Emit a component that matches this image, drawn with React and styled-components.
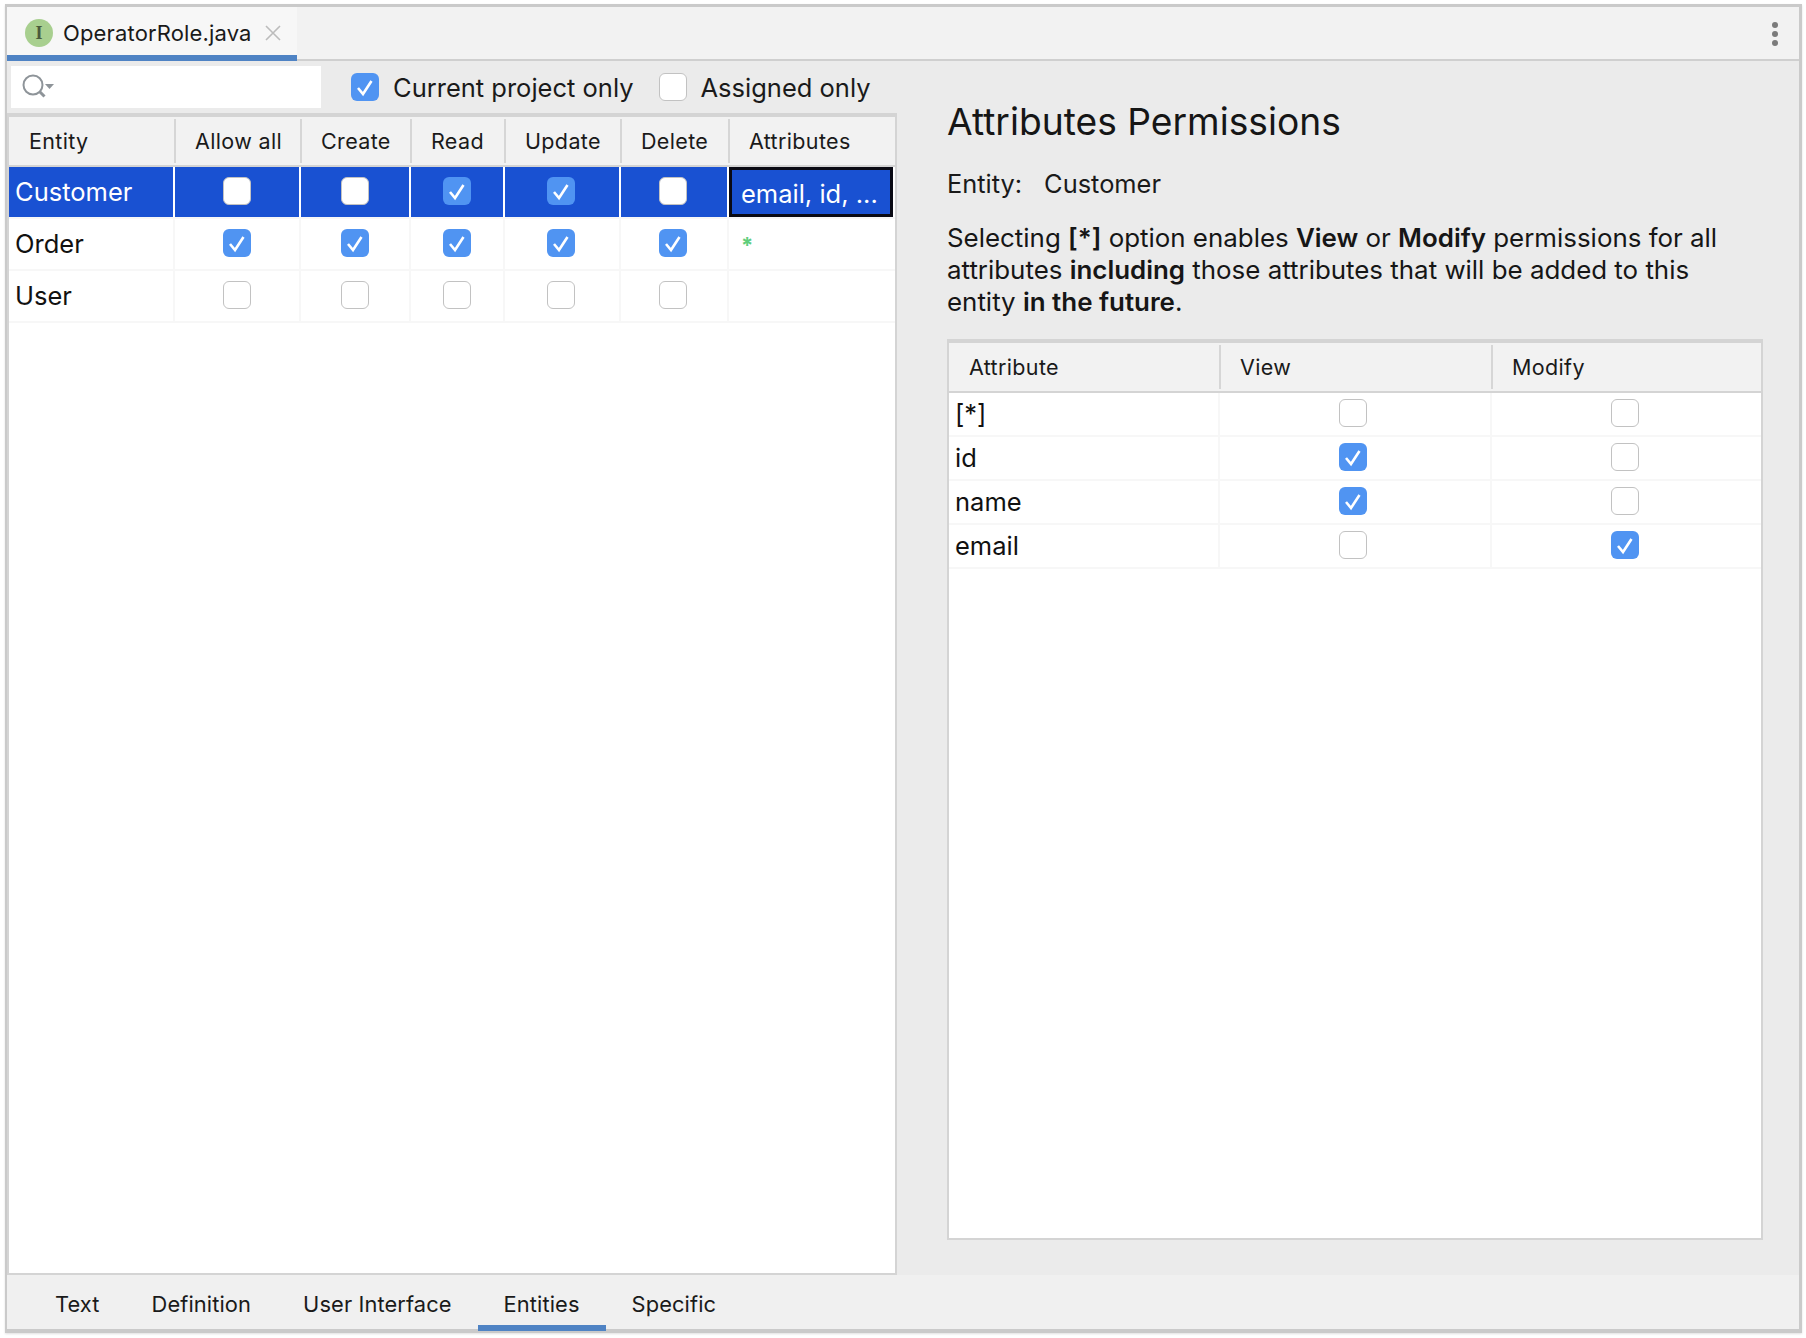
import React from 'react';
import styled, { createGlobalStyle } from 'styled-components';

const GlobalStyle = createGlobalStyle`
  html, body {
    margin: 0;
    padding: 0;
    background: #fff;
  }
  body {
    font-family: Inter, "Liberation Sans", sans-serif;
    color: #1a1a1a;
  }
`;

const Page = styled.div`
  padding: 4px 0 0 5px;
  width: 1806px;
  height: 1338px;
  box-sizing: border-box;
`;

const Window = styled.div`
  width: 1797px;
  height: 1329px;
  box-sizing: border-box;
  display: flex;
  flex-direction: column;
  border-style: solid;
  border-color: #cacaca;
  border-width: 3px 3px 4px 2px;
  background: #ebebeb;
  box-shadow: 0 1px 2px rgba(0, 0, 0, 0.12);
`;

const TabBar = styled.div`
  height: 54px;
  flex: none;
  box-sizing: border-box;
  display: flex;
  justify-content: space-between;
  background: #f2f2f2;
  border-bottom: 2px solid #cfcfcf;
`;

const EditorTab = styled.div`
  width: 290px;
  height: 54px;
  box-sizing: border-box;
  display: flex;
  align-items: center;
  padding: 3px 0 0 18px;
  background: #f7f7f7;
  border-bottom: 6px solid #4f83c4;
  font-size: 22px;
  letter-spacing: 0.15px;
`;

const FileBadge = styled.span`
  width: 28px;
  height: 28px;
  flex: none;
  border-radius: 50%;
  background: #a8cf8f;
  color: #4a5a3c;
  font-family: "Liberation Serif", serif;
  font-weight: 700;
  font-size: 18px;
  line-height: 28px;
  text-align: center;
  margin-right: 10px;
`;

const CloseIcon = styled.svg`
  width: 16px;
  height: 16px;
  flex: none;
  margin-left: 13px;
`;

const MoreDots = styled.svg`
  width: 8px;
  height: 26px;
  margin: 14px 20px 0 0;
`;

const Body = styled.div`
  flex: 1;
  min-height: 0;
  display: flex;
`;

const LeftPane = styled.div`
  width: 890px;
  flex: none;
  box-sizing: border-box;
  display: flex;
  flex-direction: column;
`;

const Toolbar = styled.div`
  height: 52px;
  flex: none;
  box-sizing: border-box;
  display: flex;
  align-items: center;
  padding: 0 0 0 4px;
`;

const SearchField = styled.div`
  width: 310px;
  height: 42px;
  box-sizing: border-box;
  background: #fff;
  display: flex;
  align-items: center;
  padding: 2px 0 0 10px;
  margin-right: 30px;
`;

const ToolbarOption = styled.label`
  display: flex;
  align-items: center;
  gap: 14px;
  font-size: 25.5px;
  margin-right: ${p => p.$gap || 0}px;
`;

const CheckBox = styled.span`
  width: 28px;
  height: 28px;
  flex: none;
  box-sizing: border-box;
  border-radius: 6px;
  background: ${p => (p.$checked ? '#5094f2' : '#fff')};
  border: ${p => (p.$checked ? 'none' : '1.5px solid #c2c2c2')};
  display: flex;
  align-items: center;
  justify-content: center;
`;

const TableFrame = styled.div`
  flex: 1;
  min-height: 0;
  background: #fff;
  display: flex;
  flex-direction: column;
  border-style: solid;
  border-color: #d4d4d4;
  border-width: 4px 2px 2px 2px;
`;

const HeaderRow = styled.div`
  height: 50px;
  flex: none;
  box-sizing: border-box;
  display: grid;
  grid-template-columns: ${p => p.$columns};
  column-gap: 2px;
  background: #f2f2f2;
  border-bottom: 2px solid #d4d4d4;
`;

const HeaderCell = styled.div`
  display: flex;
  align-items: center;
  padding-left: 20px;
  margin: 2px 0;
  font-size: 21.5px;
  letter-spacing: 0.35px;
  position: relative;

  &:not(:first-child)::before {
    content: '';
    position: absolute;
    left: -1px;
    top: 0;
    bottom: 0;
    width: 2px;
    background: #d6d6d6;
  }
`;

const Row = styled.div`
  height: ${p => p.$height}px;
  flex: none;
  display: grid;
  grid-template-columns: ${p => p.$columns};
  column-gap: 2px;
  margin-bottom: 2px;
  box-shadow: 0 2px 0 #f7f7f7;

  & > *:last-child {
    box-shadow: none;
  }
`;

const NameCell = styled.div`
  display: flex;
  align-items: center;
  padding: 0 0 1px ${p => p.$indent}px;
  font-size: 25.5px;
  background: ${p => (p.$selected ? '#1951d2' : '#fff')};
  color: ${p => (p.$selected ? '#fff' : '#111')};
  box-shadow: 2px 0 0 ${p => (p.$selected ? '#fff' : '#f7f7f7')};
`;

const CheckCell = styled.div`
  display: flex;
  align-items: center;
  justify-content: center;
  padding: 0 ${p => p.$shift || 0}px 2px 0;
  background: ${p => (p.$selected ? '#1951d2' : '#fff')};
  box-shadow: 2px 0 0 ${p => (p.$selected ? '#fff' : '#f7f7f7')};
`;

const AttributesCell = styled.div`
  display: flex;
  align-items: center;
  box-sizing: border-box;
  padding: 2px 0 0 ${p => (p.$selected ? 9 : 12)}px;
  font-size: 25.5px;
  background: ${p => (p.$selected ? '#1951d2' : '#fff')};
  color: ${p => (p.$selected ? '#fff' : '#5fce7c')};
  border: ${p => (p.$selected ? '3px solid #0a0a14' : 'none')};
`;

const Star = styled.span`
  font-size: 22px;
  font-weight: 700;
  line-height: 1;
`;

const RightPane = styled.div`
  flex: 1;
  min-width: 0;
  display: flex;
  flex-direction: column;
  padding: 38px 36px 35px 50px;
`;

const Title = styled.h1`
  margin: 0 0 23px;
  font-size: 37.2px;
  line-height: 46px;
  font-weight: 400;
  color: #161616;
`;

const EntityLine = styled.div`
  display: flex;
  gap: 22px;
  font-size: 25.4px;
  line-height: 32px;
  margin: 0 0 22px;
`;

const Description = styled.p`
  margin: 0 0 21px;
  font-size: 25.9px;
  line-height: 32px;
  color: #161616;

  b {
    font-weight: 600;
  }
`;

const BottomTabs = styled.div`
  height: 54px;
  flex: none;
  display: flex;
  padding-left: 22px;
  background: #f0f0f0;
`;

const BottomTab = styled.div`
  box-sizing: border-box;
  height: 56px;
  padding: 8px 26px 0;
  display: flex;
  align-items: center;
  font-size: 21.85px;
  letter-spacing: 0.1px;
  border-bottom: 6px solid ${p => (p.$active ? '#4f83c4' : 'transparent')};
`;

const Tick = () => (
  <svg width="28" height="28" viewBox="0 0 28 28" fill="none">
    <path d="M7 15 L12 21 L20.5 8" stroke="#fff" strokeWidth="2.6" />
  </svg>
);

const Check = ({ on }) => <CheckBox $checked={on}>{on && <Tick />}</CheckBox>;

const entityColumns = '164px 124px 108px 92px 114px 106px 164px';
const attributeColumns = '269px 270px 269px';
const permShift = [0, 0, 1, 2, 2];

const entityHeaders = ['Entity', 'Allow all', 'Create', 'Read', 'Update', 'Delete', 'Attributes'];

const entities = [
  { name: 'Customer', perms: [false, false, true, true, false], attrs: 'email, id, ...', selected: true },
  { name: 'Order', perms: [true, true, true, true, true], star: true },
  { name: 'User', perms: [false, false, false, false, false] },
];

const attributes = [
  { name: '[*]', view: false, modify: false },
  { name: 'id', view: true, modify: false },
  { name: 'name', view: true, modify: false },
  { name: 'email', view: false, modify: true },
];

const tabs = ['Text', 'Definition', 'User Interface', 'Entities', 'Specific'];

const App = () => (
  <Page>
    <GlobalStyle />
    <Window>
      <TabBar>
        <EditorTab>
          <FileBadge>I</FileBadge>
          OperatorRole.java
          <CloseIcon viewBox="0 0 16 16">
            <path d="M1 1 L15 15 M15 1 L1 15" stroke="#bcbcbc" strokeWidth="1.6" />
          </CloseIcon>
        </EditorTab>
        <MoreDots viewBox="0 0 8 26">
          <circle cx="4" cy="4" r="3" fill="#7b7b7b" />
          <circle cx="4" cy="13" r="3" fill="#7b7b7b" />
          <circle cx="4" cy="22" r="3" fill="#7b7b7b" />
        </MoreDots>
      </TabBar>

      <Body>
        <LeftPane>
          <Toolbar>
            <SearchField>
              <svg width="36" height="28" viewBox="0 0 36 28" fill="none">
                <circle cx="12" cy="11" r="9.5" stroke="#8e9499" strokeWidth="2" />
                <path d="M18.5 17.5 L23.5 22.5" stroke="#8e9499" strokeWidth="3" />
                <path d="M24 10 H33 L28.5 15 Z" fill="#8e9499" />
              </svg>
            </SearchField>
            <ToolbarOption $gap={25}>
              <Check on />
              Current project only
            </ToolbarOption>
            <ToolbarOption>
              <Check />
              Assigned only
            </ToolbarOption>
          </Toolbar>
          <TableFrame>
            <HeaderRow $columns={entityColumns}>
              {entityHeaders.map(h => <HeaderCell key={h}>{h}</HeaderCell>)}
            </HeaderRow>
            {entities.map(e => (
              <Row key={e.name} $columns={entityColumns} $height={50}>
                <NameCell $indent={6} $selected={e.selected}>{e.name}</NameCell>
                {e.perms.map((on, i) => (
                  <CheckCell key={i} $selected={e.selected} $shift={permShift[i]}><Check on={on} /></CheckCell>
                ))}
                <AttributesCell $selected={e.selected}>
                  {e.star ? <Star>*</Star> : e.attrs}
                </AttributesCell>
              </Row>
            ))}
          </TableFrame>
        </LeftPane>

        <RightPane>
          <Title>Attributes Permissions</Title>
          <EntityLine>
            <span>Entity:</span>
            <span>Customer</span>
          </EntityLine>
          <Description>
            Selecting <b>[*]</b> option enables <b>View</b> or <b>Modify</b> permissions for all<br />
            attributes <b>including</b> those attributes that will be added to this<br />
            entity <b>in the future</b>.
          </Description>
          <TableFrame>
            <HeaderRow $columns={attributeColumns}>
              <HeaderCell>Attribute</HeaderCell>
              <HeaderCell>View</HeaderCell>
              <HeaderCell>Modify</HeaderCell>
            </HeaderRow>
            {attributes.map(a => (
              <Row key={a.name} $columns={attributeColumns} $height={42}>
                <NameCell $indent={6}>{a.name}</NameCell>
                <CheckCell $shift={4}><Check on={a.view} /></CheckCell>
                <CheckCell $shift={4}><Check on={a.modify} /></CheckCell>
              </Row>
            ))}
          </TableFrame>
        </RightPane>
      </Body>

      <BottomTabs>
        {tabs.map(t => (
          <BottomTab key={t} $active={t === 'Entities'}>{t}</BottomTab>
        ))}
      </BottomTabs>
    </Window>
  </Page>
);

export default App;
